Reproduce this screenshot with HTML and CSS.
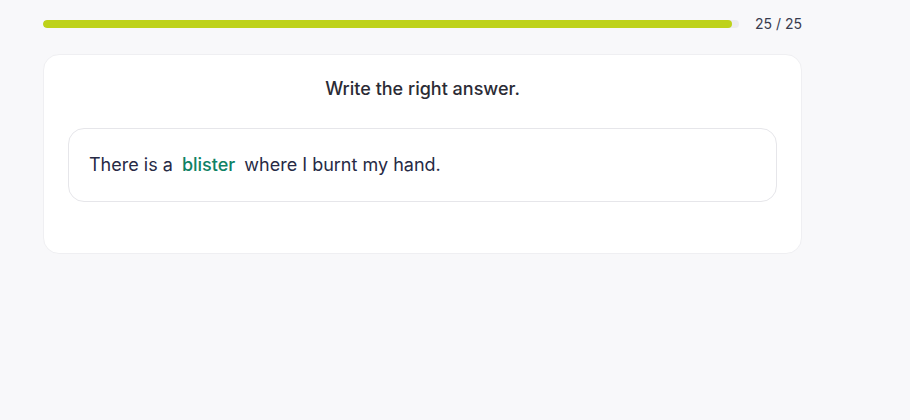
FILE: index.html
```html
<!DOCTYPE html>
<html lang="en">
<head>
<meta charset="utf-8">
<title>Quiz</title>
<link rel="stylesheet" href="styles.css">
</head>
<body>
<main class="page">
  <div class="progress">
    <div class="track"><div class="fill" style="width: 99%"></div></div>
    <span class="count">25 / 25</span>
  </div>
  <section class="card">
    <h2 class="prompt">Write the right answer.</h2>
    <div class="sentence">
      <p>There is a <span class="answer">blister</span> where I burnt my hand.</p>
    </div>
  </section>
</main>
</body>
</html>
```
FILE: styles.css
```css
html, body {
  margin: 0;
  background: #f8f8fa;
  font-family: Inter, "Noto Sans", sans-serif;
  color: #272a3a;
}
.page {
  width: 759px;
  padding: 17px 0 0 43px;
}
.progress {
  display: flex;
  align-items: center;
  gap: 16px;
  height: 14px;
}
.track {
  flex: 1;
  height: 8px;
  background: #ececef;
  border-radius: 4px;
  overflow: hidden;
}
.fill {
  height: 100%;
  background: #bed21a;
  border-radius: 4px;
}
.count {
  font-size: 14px;
  color: #383b4e;
  line-height: 14px;
}
.card {
  margin-top: 23px;
  background: #fff;
  border: 1px solid #efeff2;
  border-radius: 16px;
  padding: 23px 24px 51px;
  box-sizing: border-box;
  height: 200px;
}
.prompt {
  margin: 0;
  text-align: center;
  font-size: 18px;
  font-weight: 500;
  line-height: 22px;
  color: #2b2b35;
}
.sentence {
  margin-top: 28px;
  border: 1px solid #e6e6ea;
  border-radius: 16px;
  padding: 0 20px;
  height: 74px;
  box-sizing: border-box;
  display: flex;
  align-items: center;
}
.sentence p {
  margin: 0;
  font-size: 18px;
  line-height: 24px;
  color: #272a45;
}
.answer {
  color: #0f8265;
  font-weight: 500;
  margin: 0 4px;
}
```
